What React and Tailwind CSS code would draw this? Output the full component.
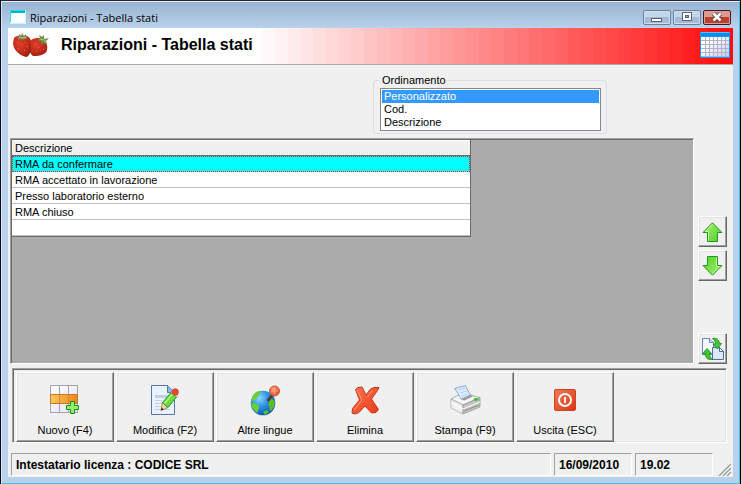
import React, { useState } from 'react';

const SORT_OPTIONS = ['Personalizzato', 'Cod.', 'Descrizione'];

const STATES = [
  'RMA da confermare',
  'RMA accettato in lavorazione',
  'Presso laboratorio esterno',
  'RMA chiuso',
  '',
];

const BANDS = 38;

const WindowIcon = () => (
  <svg width="16" height="14" viewBox="0 0 16 14" shapeRendering="crispEdges">
    <rect width="16" height="14" fill="#c8f6fb" />
    <rect x="1" y="3" width="14" height="10" fill="#fff" />
    <rect width="15" height="1" fill="#00e8f8" />
    <rect x="1" y="1" width="14" height="2" fill="#12aebb" />
    <rect width="1" height="12" fill="#1ae6f5" />
  </svg>
);

const StrawberryIcon = () => (
  <svg width="38" height="26" viewBox="0 0 38 26">
    <defs>
      <radialGradient id="berry" cx="0.4" cy="0.35" r="0.7">
        <stop offset="0" stopColor="#dd3f28" />
        <stop offset="0.6" stopColor="#c42c1a" />
        <stop offset="1" stopColor="#9a2012" />
      </radialGradient>
    </defs>
    <path d="M18 8c3-3 8-4 12-2 4 2 6 6 5 11-1 4-6 6-14 6-4-3-6-10-3-15z" fill="url(#berry)" />
    <path d="M2 5c3-3 6-2 9-2 4-1 8 1 8 7 0 6 0 11-4 14C8 23 1 17 1 10z" fill="url(#berry)" />
    <path d="M4 4l3 0 0-3 2 2 1-3 2 3 2-2 0 3 3 1-4 1-2 1-2-1-3 1 0-2z" fill="#7c8a50" />
    <path d="M26 7l2-2-1-3 3 2 2-2 0 4 5-1-3 3 1 4-3-2-2 2-1-3z" fill="#6f8c3c" />
    <path d="M7 4l3 1 4-1M28 6l4 1 2 2" stroke="#b4c48c" fill="none" />
    <g fill="#e2694c">
      <rect x="5" y="9" width="1" height="1" /><rect x="9" y="11" width="1" height="1" />
      <rect x="13" y="9" width="1" height="1" /><rect x="6" y="15" width="1" height="1" />
      <rect x="12" y="17" width="1" height="1" /><rect x="15" y="13" width="1" height="1" />
      <rect x="23" y="11" width="1" height="1" /><rect x="26" y="14" width="1" height="1" />
      <rect x="24" y="18" width="1" height="1" /><rect x="31" y="16" width="1" height="1" />
    </g>
  </svg>
);

const CalendarIcon = () => (
  <svg width="30" height="26" viewBox="0 0 30 26" shapeRendering="crispEdges">
    <defs>
      <linearGradient id="cal" x1="0" x2="1" y1="0" y2="1">
        <stop offset="0.3" stopColor="#fff" />
        <stop offset="1" stopColor="#c4c4f4" />
      </linearGradient>
    </defs>
    <rect width="30" height="26" rx="1" fill="#1a94ec" />
    <rect x="1" width="28" height="1" fill="#52c4ff" />
    <rect x="1" y="1" width="28" height="3" fill="#0a8cf0" />
    <rect x="1" y="5" width="28" height="20" fill="url(#cal)" />
    <path d="M5.5 5v20M9.5 5v20M13.5 5v20M17.5 5v20M21.5 5v20M25.5 5v20M1 8.5h28M1 12.5h28M1 16.5h28M1 20.5h28M1 24.5h28" stroke="#b2b2c6" />
  </svg>
);

const ArrowIcon = ({ down = false }) => (
  <svg width="21" height="20" viewBox="0 0 21 20" className={down ? 'rotate-180' : ''}>
    <defs>
      <linearGradient id="arrow" x1="0" x2="1" y1="0" y2="1">
        <stop offset="0" stopColor="#a8f470" />
        <stop offset="1" stopColor="#4fce2c" />
      </linearGradient>
    </defs>
    <path d="M10.5 0.8L20 10.500H15.500V19.500H5.500V10.500H1z" fill="url(#arrow)" stroke="#1f9a1c" strokeLinejoin="round" />
    <path d="M10.5 2.500L3.500 9.500H6.500V18.500" fill="none" stroke="#c9f8a4" />
  </svg>
);

const SwapIcon = () => (
  <svg width="24" height="24" viewBox="0 0 24 24">
    <path d="M1.500 1.500h7l4 4v12h-11z" fill="#f3f7ff" stroke="#6986b4" />
    <path d="M8.500 1.500v4h4" fill="#cfe0fa" stroke="#6986b4" />
    <path d="M11.500 10.500h7l4 4v8h-11z" fill="#dce9fd" stroke="#4a6ea4" />
    <path d="M18.500 10.500v4h4z" fill="#fff" stroke="#4a6ea4" />
    <path d="M11.500 1.500c4-1 6.500 1 7 5h2l-4 5.500-4.500-5h2.500c0-2.500-1-4-3-5.500z" fill="#43c534" stroke="#168418" strokeWidth="0.800" />
    <path d="M12 22.500c-5 0.500-7.500-1-7.500-5.500H1.500l4.500-5.500 4.500 5H8.500c0 3 1 4.500 3.500 6z" fill="#43c534" stroke="#168418" strokeWidth="0.800" />
  </svg>
);

const NewIcon = () => (
  <svg width="30" height="30" viewBox="0 0 30 30">
    <defs>
      <linearGradient id="cell" x1="0" x2="1" y1="0" y2="1">
        <stop offset="0" stopColor="#fff" />
        <stop offset="1" stopColor="#e2e2fa" />
      </linearGradient>
      <linearGradient id="row">
        <stop offset="0" stopColor="#ffc65c" />
        <stop offset="1" stopColor="#f08418" />
      </linearGradient>
    </defs>
    <rect x="0.500" y="0.500" width="27" height="27" fill="url(#cell)" stroke="#a2a2a8" />
    <path d="M9.500 0v28M18.500 0v28" stroke="#a2a2a8" />
    <rect x="0.500" y="9.500" width="27" height="9" fill="url(#row)" stroke="#c07c2c" />
    <path d="M9.500 10v8M18.500 10v8" stroke="#d88c30" />
    <path d="M20.500 16.500h4v4h4v4h-4v4h-4v-4h-4v-4h4z" fill="#92ee6c" stroke="#18901c" />
  </svg>
);

const EditIcon = () => (
  <svg width="28" height="30" viewBox="0 0 28 30">
    <path d="M0.500 0.500h16l7 7v22h-23z" fill="#eaf2fe" stroke="#5676a8" />
    <path d="M16.500 0.500v7h7" fill="#8cb4e8" stroke="#5676a8" />
    <path d="M4 10h12v3H4zM4 15h7v1H4zM4 18h7v1H4zM4 21h15v1H4zM4 24h15v1H4z" fill="#c0cee6" />
    <path d="M10 25.500l1.500-8 5.500 5z" fill="#f6d494" stroke="#8a6a34" strokeWidth="0.700" />
    <path d="M10 25.500l0.600-3 2 2z" fill="#222" />
    <path d="M11.500 17.500L20 7.500l5.500 4.500L17 22.500z" fill="#6cdc3c" stroke="#23951f" />
    <path d="M13.500 18.500l8-9.500" stroke="#b6f590" strokeWidth="1.500" />
    <path d="M20 7.500l1.500-2 5.500 4.500L25.500 12z" fill="#dce6f4" stroke="#8494b0" strokeWidth="0.700" />
    <circle cx="24.200" cy="7" r="3.200" fill="#ee4a30" stroke="#c2341f" strokeWidth="0.700" />
  </svg>
);

const GlobeIcon = () => (
  <svg width="31" height="31" viewBox="0 0 31 31">
    <defs>
      <radialGradient id="sea" cx="0.35" cy="0.3" r="0.75">
        <stop offset="0" stopColor="#8cd6fe" />
        <stop offset="0.5" stopColor="#2a90e4" />
        <stop offset="1" stopColor="#0c52ac" />
      </radialGradient>
      <radialGradient id="pin" cx="0.4" cy="0.35" r="0.7">
        <stop offset="0" stopColor="#ffa070" />
        <stop offset="1" stopColor="#dc4a20" />
      </radialGradient>
    </defs>
    <circle cx="13" cy="18" r="12.300" fill="url(#sea)" />
    <path d="M2 13c1-4 4-7 8-7 2 1 0 3-2 3 2 2-1 3-2 4s-1 3-4 3zM1.500 18c3 0 7 1 7.500 4 0 3-2 3-1 6-4-2-7-6-6.500-10z" fill="#6bd032" />
    <path d="M19 15c2-2 4-1 5.500 1 1 4-1 8-4 10-2-2 0-4-2-6zM13 27l4-2 2 2-4 3z" fill="#58c02e" />
    <path d="M17.500 16l5-6" stroke="#4c3c40" strokeWidth="3" />
    <circle cx="24.500" cy="6" r="5" fill="url(#pin)" stroke="#c65a34" />
    <path d="M21 6h7M24.500 2v8" stroke="#f4a488" strokeWidth="0.800" />
  </svg>
);

const DeleteIcon = () => (
  <svg width="29" height="29" viewBox="0 0 29 29">
    <defs>
      <linearGradient id="del" x1="0" x2="1" y1="0" y2="1">
        <stop offset="0" stopColor="#ff7452" />
        <stop offset="1" stopColor="#ee3a16" />
      </linearGradient>
    </defs>
    <path d="M4.500 3.500L7 1.500L11 1L15 9L19.500 3L23 1.500L28 1.500L26.500 4.500L20.500 13L27.500 23.500L25 26.500L20.500 27L14 20L8 26.500L4 28L1 27L1.500 22.500L8.500 14z" fill="url(#del)" stroke="#c83418" strokeLinejoin="round" />
    <path d="M6 4L11 14L3 24M16.500 11L21.500 4" fill="none" stroke="#ff9a7c" />
  </svg>
);

const PrinterIcon = () => (
  <svg width="31" height="30" viewBox="0 0 31 30">
    <path d="M1 14L12 8L30 12.500L13 20z" fill="#f5f5f5" stroke="#949494" strokeWidth="0.700" />
    <path d="M1 14v9l12 6V20z" fill="#f1f1f1" stroke="#a0a0a0" strokeWidth="0.700" />
    <path d="M13 20l17-7.500V22L13 29z" fill="#c4c4c4" stroke="#8c8c8c" strokeWidth="0.700" />
    <path d="M11 14.500L20.500 10l3 1-9 4.500z" fill="#9a9a9a" />
    <path d="M4.500 3.500L15.500 0.500C17 5 19 7 20.500 10L11 14C9 11 7 6 4.500 3.500z" fill="#dcebff" stroke="#7899c4" strokeWidth="0.800" />
    <path d="M8 5l7-2M10 8l7-2M12 11l6-2" stroke="#b4d0f4" />
    <path d="M1 18l12 6 17-7" fill="none" stroke="#fff" />
    <path d="M14 26l15-6" stroke="#8c8c8c" />
    <ellipse cx="26" cy="14.500" rx="2.200" ry="1.400" fill="#34c524" />
  </svg>
);

const PowerIcon = () => (
  <svg width="22" height="22" viewBox="0 0 22 22">
    <defs>
      <linearGradient id="pow" x1="0" x2="1" y1="0" y2="1">
        <stop offset="0" stopColor="#f27a58" />
        <stop offset="1" stopColor="#dc3410" />
      </linearGradient>
    </defs>
    <rect x="0.500" y="0.500" width="21" height="21" rx="1.500" fill="url(#pow)" stroke="#cc4426" />
    <circle cx="11" cy="11" r="6" fill="none" stroke="#fff" strokeWidth="2" />
    <rect x="10" y="8" width="2" height="6" fill="#fff" />
  </svg>
);

const ACTIONS = [
  { label: 'Nuovo (F4)', Icon: NewIcon },
  { label: 'Modifica (F2)', Icon: EditIcon },
  { label: 'Altre lingue', Icon: GlobeIcon },
  { label: 'Elimina', Icon: DeleteIcon },
  { label: 'Stampa (F9)', Icon: PrinterIcon },
  { label: 'Uscita (ESC)', Icon: PowerIcon },
];

const CaptionButton = ({ label, close = false, children }) => (
  <button
    type="button"
    aria-label={label}
    className={`flex h-[15px] w-7 items-center justify-center rounded-[2px] border ${
      close
        ? 'border-[#4b1521] bg-linear-to-b from-[#dd9a8e] from-45% to-[#b8402c] to-50% shadow-[inset_0_0_0_1px_#d9a097]'
        : 'border-[#6b809c] bg-linear-to-b from-[#c4d6ea] from-45% to-[#a3bbd6] to-50% shadow-[inset_0_0_0_1px_#cfdff0]'
    }`}
  >
    {children}
  </button>
);

const raised =
  'border border-t-white border-l-white border-r-[#696969] border-b-[#696969] bg-[#f0f0f0] shadow-[inset_-1px_-1px_0_#a0a0a0,inset_1px_1px_0_#e3e3e3] active:bg-[#e6e6e6]';

const SideButton = ({ label, children }) => (
  <button type="button" aria-label={label} className={`flex h-[31px] w-[29px] items-center justify-center ${raised}`}>
    {children}
  </button>
);

const StatusCell = ({ className = '', children }) => (
  <div className={`h-[23px] border border-t-[#a0a0a0] border-l-[#a0a0a0] border-r-white border-b-white px-1 text-xs leading-[22px] font-bold whitespace-nowrap ${className}`}>
    {children}
  </div>
);

export default function App() {
  const [sort, setSort] = useState(SORT_OPTIONS[0]);
  const [selected, setSelected] = useState(0);

  return (
    <div className="flex min-h-screen flex-col border border-t-[#2a2530] border-r-black border-b-black border-l-[#101018] bg-[#b9d1ea] font-['Liberation_Sans',Arial,sans-serif] text-[11px] text-black">
      <div className="flex grow flex-col border border-t-[#e4eef8] border-r-[#35c6e8] border-b-[#35c6e8] border-l-[#d4e4f4] px-1.5 pb-[6px]">
        {/* Title bar */}
        <div className="-mx-1.5 flex h-[26px] items-center bg-linear-to-b from-[#98b4d2] to-[#b9d1ea] pr-2 pl-2">
          <div className="pt-1">
            <WindowIcon />
          </div>
          <span className="ml-1 grow pt-1.5 font-['Open_Sans','Segoe_UI',sans-serif] text-[11px] leading-4">Riparazioni - Tabella stati</span>
          <div className="flex gap-0.5 pt-1">
            <CaptionButton label="Riduci a icona">
              <svg width="12" height="13" viewBox="0 0 12 13"><rect x="0.500" y="7.500" width="10" height="3" fill="#fff" stroke="#5a6070" /></svg>
            </CaptionButton>
            <CaptionButton label="Ingrandisci">
              <svg width="12" height="10" viewBox="0 0 12 10">
                <rect x="1.500" y="0.500" width="9" height="8" fill="#fff" stroke="#5a6070" />
                <rect x="4.500" y="3.500" width="3" height="2" fill="#8fa8c8" stroke="#5a6070" />
              </svg>
            </CaptionButton>
            <CaptionButton label="Chiudi" close>
              <svg width="12" height="10" viewBox="0 0 12 10">
                <path d="M2.500 1.500l7 7M9.500 1.500l-7 7" stroke="#5b4550" strokeWidth="4.500" />
                <path d="M2.500 1.500l7 7M9.500 1.500l-7 7" stroke="#fff" strokeWidth="2.600" />
              </svg>
            </CaptionButton>
          </div>
        </div>

        <main className="flex grow flex-col bg-[#f0f0f0]">
          {/* Header banner */}
          <header className="relative flex h-[37px] items-center border-b border-[#a8a8a8] bg-white pr-[3px] pl-1">
            <div className="absolute inset-y-0 right-0 left-1/3 flex">
              {Array.from({ length: BANDS }, (_, i) => {
                const c = Math.round(255 - (i * 242) / (BANDS - 1));
                return <div key={i} className="flex-1" style={{ backgroundColor: `rgb(255, ${c}, ${c})` }} />;
              })}
            </div>
            <StrawberryIcon />
            <h1 className="relative ml-[11px] grow pb-0.5 text-base leading-5 font-bold">Riparazioni - Tabella stati</h1>
            <div className="relative pb-0.5">
              <CalendarIcon />
            </div>
          </header>

          <fieldset className="mt-2 mr-[126px] ml-auto w-[234px] rounded-[3px] border border-[#d5dfe5] pt-px pr-[5px] pb-0.5 pl-1.5">
            <legend className="px-0.5 leading-[14px]">
              <label htmlFor="ordinamento">Ordinamento</label>
            </legend>
            <select
              id="ordinamento"
              size={3}
              value={sort}
              onChange={(e) => setSort(e.target.value)}
              className="block h-[43px] w-full overflow-hidden border border-[#828790] bg-white p-px outline-none"
            >
              {SORT_OPTIONS.map((option) => (
                <option
                  key={option}
                  value={option}
                  className="h-[13px] min-h-0 px-[2px] py-0 leading-[14px] checked:bg-[#3399ff] checked:bg-linear-to-r checked:from-[#3399ff] checked:to-[#3399ff] checked:text-white checked:[-webkit-text-fill-color:white]"
                >
                  {option}
                </option>
              ))}
            </select>
          </fieldset>

          <div className="mt-1 flex grow pr-1.5 pl-0.5">
            {/* Grid */}
            <div className="min-h-[226px] grow border border-t-[#a0a0a0] border-r-white border-b-white border-l-[#a0a0a0] bg-[#ababab] shadow-[inset_1px_1px_0_#696969]">
              <table className="mt-px ml-px w-[459px] max-w-full border-separate border-spacing-0 border-r border-b border-[#696969] bg-white text-left">
                <thead>
                  <tr>
                    <th className="h-4 border-t border-b border-t-white border-b-[#696969] bg-[#f0f0f0] px-[3px] py-0 leading-[14px] font-normal">Descrizione</th>
                  </tr>
                </thead>
                <tbody>
                  {STATES.map((state, i) => (
                    <tr key={i} onClick={() => setSelected(i)}>
                      <td
                        className={`h-4 border-b border-[#c0c0c0] px-[3px] pt-px pb-0 leading-[14px] ${
                          i === selected ? 'bg-[#00ffff] outline-1 -outline-offset-1 outline-dotted outline-[#c03030]' : ''
                        }`}
                      >
                        {state}
                      </td>
                    </tr>
                  ))}
                </tbody>
              </table>
            </div>

            <div className="ml-1 flex flex-col gap-[3px] pt-[78px]">
              <SideButton label="Sposta su"><ArrowIcon /></SideButton>
              <SideButton label="Sposta giù"><ArrowIcon down /></SideButton>
              <div className="mt-auto">
                <SideButton label="Scambia"><SwapIcon /></SideButton>
              </div>
            </div>
          </div>

          {/* Toolbar */}
          <div className="mt-1 mr-1.5 ml-1 flex flex-wrap gap-0.5 border border-t-[#a0a0a0] border-r-white border-b-white border-l-[#a0a0a0] pt-[3px] pl-[3px] shadow-[inset_1px_1px_0_#696969,inset_-1px_-1px_0_#e3e3e3]">
            {ACTIONS.map(({ label, Icon }) => (
              <button key={label} type="button" className={`flex h-[70px] w-[98px] flex-col items-center ${raised}`}>
                <span className="flex h-[50px] items-center pt-1">
                  <Icon />
                </span>
                <span className="leading-[14px]">{label}</span>
              </button>
            ))}
          </div>

          {/* Status bar */}
          <footer className="mt-2.5 flex gap-[3px] pb-px pl-[3px]">
            <StatusCell className="grow">Intestatario licenza : CODICE SRL</StatusCell>
            <StatusCell className="w-[78px]">16/09/2010</StatusCell>
            <StatusCell className="w-[78px]">19.02</StatusCell>
            <svg width="16" height="13" viewBox="0 0 16 13" className="mr-px self-end">
              <path d="M3 13L15 1M7 13L15 5M11 13L15 9" stroke="#a0a0a0" strokeWidth="1.500" />
              <path d="M5 13L16 2M9 13L16 6M13 13L16 10" stroke="#fff" />
            </svg>
          </footer>
        </main>
      </div>
    </div>
  );
}
